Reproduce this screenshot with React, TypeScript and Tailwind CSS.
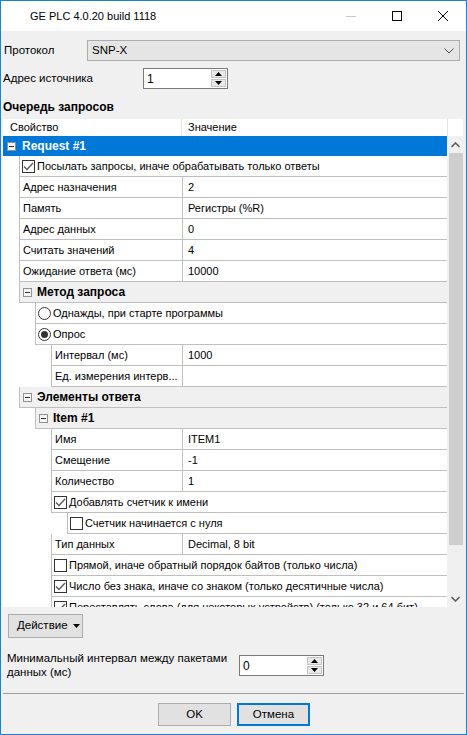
import React from "react";

type Row =
  | { kind: "group"; depth: number; label: string; selected?: boolean }
  | { kind: "prop"; depth: number; label: string; value: string }
  | { kind: "check"; depth: number; label: string; on: boolean }
  | { kind: "radio"; depth: number; label: string; on: boolean };

const rows: Row[] = [
  { kind: "group", depth: 0, label: "Request #1", selected: true },
  { kind: "check", depth: 1, label: "Посылать запросы, иначе обрабатывать только ответы", on: true },
  { kind: "prop", depth: 1, label: "Адрес назначения", value: "2" },
  { kind: "prop", depth: 1, label: "Память", value: "Регистры (%R)" },
  { kind: "prop", depth: 1, label: "Адрес данных", value: "0" },
  { kind: "prop", depth: 1, label: "Считать значений", value: "4" },
  { kind: "prop", depth: 1, label: "Ожидание ответа (мс)", value: "10000" },
  { kind: "group", depth: 1, label: "Метод запроса" },
  { kind: "radio", depth: 2, label: "Однажды, при старте программы", on: false },
  { kind: "radio", depth: 2, label: "Опрос", on: true },
  { kind: "prop", depth: 3, label: "Интервал (мс)", value: "1000" },
  { kind: "prop", depth: 3, label: "Ед. измерения интерв...", value: "" },
  { kind: "group", depth: 1, label: "Элементы ответа" },
  { kind: "group", depth: 2, label: "Item #1" },
  { kind: "prop", depth: 3, label: "Имя", value: "ITEM1" },
  { kind: "prop", depth: 3, label: "Смещение", value: "-1" },
  { kind: "prop", depth: 3, label: "Количество", value: "1" },
  { kind: "check", depth: 3, label: "Добавлять счетчик к имени", on: true },
  { kind: "check", depth: 4, label: "Счетчик начинается с нуля", on: false },
  { kind: "prop", depth: 3, label: "Тип данных", value: "Decimal, 8 bit" },
  { kind: "check", depth: 3, label: "Прямой, иначе обратный порядок байтов (только числа)", on: false },
  { kind: "check", depth: 3, label: "Число без знака, иначе со знаком (только десятичные числа)", on: true },
  { kind: "check", depth: 3, label: "Переставлять слова (для некоторых устройств) (только 32 и 64 бит)", on: true },
];

const indent = ["w-0", "w-[16px]", "w-[32px]", "w-[48px]", "w-[64px]"];

function MinusBox() {
  return (
    <span className="flex h-[9px] w-[9px] shrink-0 items-center justify-center border border-[#919191] bg-[#f4f4f4]">
      <span className="h-[1px] w-[5px] bg-[#333]" />
    </span>
  );
}

function CheckBox({ on }: { on: boolean }) {
  return (
    <span className="flex h-[13px] w-[13px] shrink-0 items-center justify-center border border-[#333] bg-white">
      {on && (
        <svg width="11" height="9" viewBox="0 0 11 9">
          <path d="M1 4.5 L4 7.5 L10 1" fill="none" stroke="#5a5a5a" strokeWidth="1.4" />
        </svg>
      )}
    </span>
  );
}

function Radio({ on }: { on: boolean }) {
  return (
    <span className="flex h-[13px] w-[13px] shrink-0 items-center justify-center rounded-full border border-[#333] bg-white">
      {on && <span className="h-[7px] w-[7px] rounded-full bg-[#333]" />}
    </span>
  );
}

function GridRow({ row }: { row: Row }) {
  if (row.kind === "group" && row.depth === 0) {
    return (
      <div className="flex h-[20px] shrink-0 items-center bg-[#0078d7] pl-[4px] text-white">
        <MinusBox />
        <span className="ml-[6px] text-[12px] font-bold">{row.label}</span>
      </div>
    );
  }

  let body: React.ReactNode;
  if (row.kind === "group") {
    body = (
      <div className="flex flex-1 items-center border-b border-l border-[#bfbfbf] bg-[#f0f0f0] pl-[3px]">
        <MinusBox />
        <span className="ml-[5px] text-[12px] font-bold">{row.label}</span>
      </div>
    );
  } else if (row.kind === "prop") {
    body = (
      <div className="flex flex-1 border-b border-l border-[#bfbfbf]">
        <div className="flex flex-1 items-center overflow-hidden whitespace-nowrap pl-[3px] pt-[1px]">{row.label}</div>
        <div className="flex w-[265px] items-center border-l border-[#bfbfbf] pl-[5px] pt-[1px]">{row.value}</div>
      </div>
    );
  } else {
    body = (
      <div className="flex flex-1 items-center gap-[2px] overflow-hidden whitespace-nowrap border-b border-l border-[#bfbfbf] pl-[2px]">
        {row.kind === "check" ? <CheckBox on={row.on} /> : <Radio on={row.on} />}
        <span className="pt-[1px]">{row.label}</span>
      </div>
    );
  }

  return (
    <div className="flex h-[21px] shrink-0">
      <div className={`${indent[row.depth]} shrink-0`} />
      {body}
    </div>
  );
}

function Spin({ value }: { value: string }) {
  return (
    <div className="flex h-[21px] w-[85px] border border-[#7a7a7a] bg-white">
      <div className="flex flex-1 items-center pl-[3px] text-[12px]">{value}</div>
      <div className="my-[1px] mr-[1px] flex w-[15px] flex-col gap-[1px]">
        <div className="flex flex-1 items-center justify-center border border-[#c4c4c4] bg-[#e9e9e9]">
          <svg width="7" height="4" viewBox="0 0 7 4">
            <path d="M0 4 L3.5 0 L7 4 Z" fill="#000" />
          </svg>
        </div>
        <div className="flex flex-1 items-center justify-center border border-[#c4c4c4] bg-[#e9e9e9]">
          <svg width="7" height="4" viewBox="0 0 7 4">
            <path d="M0 0 L3.5 4 L7 0 Z" fill="#000" />
          </svg>
        </div>
      </div>
    </div>
  );
}

function ScrollArrow({ down }: { down?: boolean }) {
  return (
    <div className="flex h-[17px] shrink-0 items-center justify-center">
      <svg width="9" height="6" viewBox="0 0 9 6">
        <path
          d={down ? "M0.5 1 L4.5 5 L8.5 1" : "M0.5 5 L4.5 1 L8.5 5"}
          fill="none"
          stroke="#606060"
          strokeWidth="1.6"
        />
      </svg>
    </div>
  );
}

export default function App() {
  return (
    <div className="flex h-[735px] w-[467px] flex-col overflow-hidden border border-[#1883d7] bg-[#f0f0f0] font-['Liberation_Sans',Arial,sans-serif] text-[11px] text-black">
      {/* title bar */}
      <div className="flex h-[30px] shrink-0 items-center bg-white">
        <span className="pl-[29px] text-[11px]">GE PLC 4.0.20 build 1118</span>
        <div className="ml-auto flex items-center">
          <div className="flex w-[46px] justify-center">
            <svg width="10" height="10" viewBox="0 0 10 10">
              <path d="M0 5.5 H10" stroke="#c8c8c8" strokeWidth="1" />
            </svg>
          </div>
          <div className="flex w-[46px] justify-center">
            <svg width="10" height="10" viewBox="0 0 10 10">
              <rect x="0.5" y="0.5" width="9" height="9" fill="none" stroke="#000" strokeWidth="1" />
            </svg>
          </div>
          <div className="flex w-[46px] justify-center">
            <svg width="10" height="10" viewBox="0 0 10 10">
              <path d="M0 0 L10 10 M10 0 L0 10" stroke="#000" strokeWidth="1" />
            </svg>
          </div>
        </div>
      </div>

      {/* protocol */}
      <div className="mt-[9px] flex h-[21px] items-center">
        <span className="w-[86px] pl-[3px] text-[11.5px]">Протокол</span>
        <div className="flex h-[21px] w-[373px] items-center border border-[#adadad] bg-[#e5e5e5] pl-[4px] text-[11.5px]">
          SNP-X
          <svg className="ml-auto mr-[5px]" width="10" height="6" viewBox="0 0 10 6">
            <path d="M0.5 0.5 L5 5 L9.5 0.5" fill="none" stroke="#505050" strokeWidth="1" />
          </svg>
        </div>
      </div>

      {/* source address */}
      <div className="mt-[7px] flex h-[21px] items-center">
        <span className="w-[142px] pl-[2px] text-[11.5px]">Адрес источника</span>
        <Spin value="1" />
      </div>

      <div className="mt-[10px] h-[16px] pl-[2px] text-[12px] font-bold leading-[16px]">Очередь запросов</div>

      {/* property grid */}
      <div className="ml-[2px] mt-[4px] flex h-[488px] w-[460px] shrink-0 flex-col bg-white">
        <div className="flex h-[17px] shrink-0">
          <div className="flex w-[444px]">
            <div className="flex w-[179px] items-center border-r border-[#e5e5e5] pl-[7px]">Свойство</div>
            <div className="flex flex-1 items-center pl-[6px]">Значение</div>
          </div>
          <div className="flex-1 border-l border-[#e5e5e5]" />
        </div>
        <div className="flex min-h-0 flex-1">
          <div className="flex w-[444px] flex-col overflow-hidden">
            {rows.map((row, i) => (
              <GridRow key={i} row={row} />
            ))}
          </div>
          <div className="flex flex-1 flex-col bg-[#f0f0f0]">
            <ScrollArrow />
            <div className="ml-[2px] h-[392px] bg-[#cdcdcd]" />
            <div className="flex-1" />
            <ScrollArrow down />
          </div>
        </div>
      </div>

      {/* actions */}
      <div className="ml-[7px] mt-[7px] flex h-[24px] w-[75px] items-center border border-[#adadad] bg-[#e1e1e1] pl-[8px] text-[11.5px]">
        Действие
        <svg className="ml-[5px]" width="7" height="4" viewBox="0 0 7 4">
          <path d="M0 0 L3.5 4 L7 0 Z" fill="#000" />
        </svg>
      </div>

      <div className="mt-[13px] flex">
        <div className="w-[238px] pl-[6px] text-[11.5px] leading-[14px]">
          Минимальный интервал между пакетами
          <br />
          данных (мс)
        </div>
        <div className="mt-[4px]">
          <Spin value="0" />
        </div>
      </div>

      <div className="mx-[2px] mt-[14px] border-t border-[#a0a0a0]" />

      <div className="mt-[9px] flex justify-center gap-[6px] pl-[1px]">
        <div className="flex h-[23px] w-[73px] items-center justify-center border border-[#adadad] bg-[#e1e1e1] text-[11.5px]">
          OK
        </div>
        <div className="flex h-[23px] w-[73px] items-center justify-center border-2 border-[#0078d7] bg-[#e1e1e1] text-[11.5px]">
          Отмена
        </div>
      </div>
    </div>
  );
}
